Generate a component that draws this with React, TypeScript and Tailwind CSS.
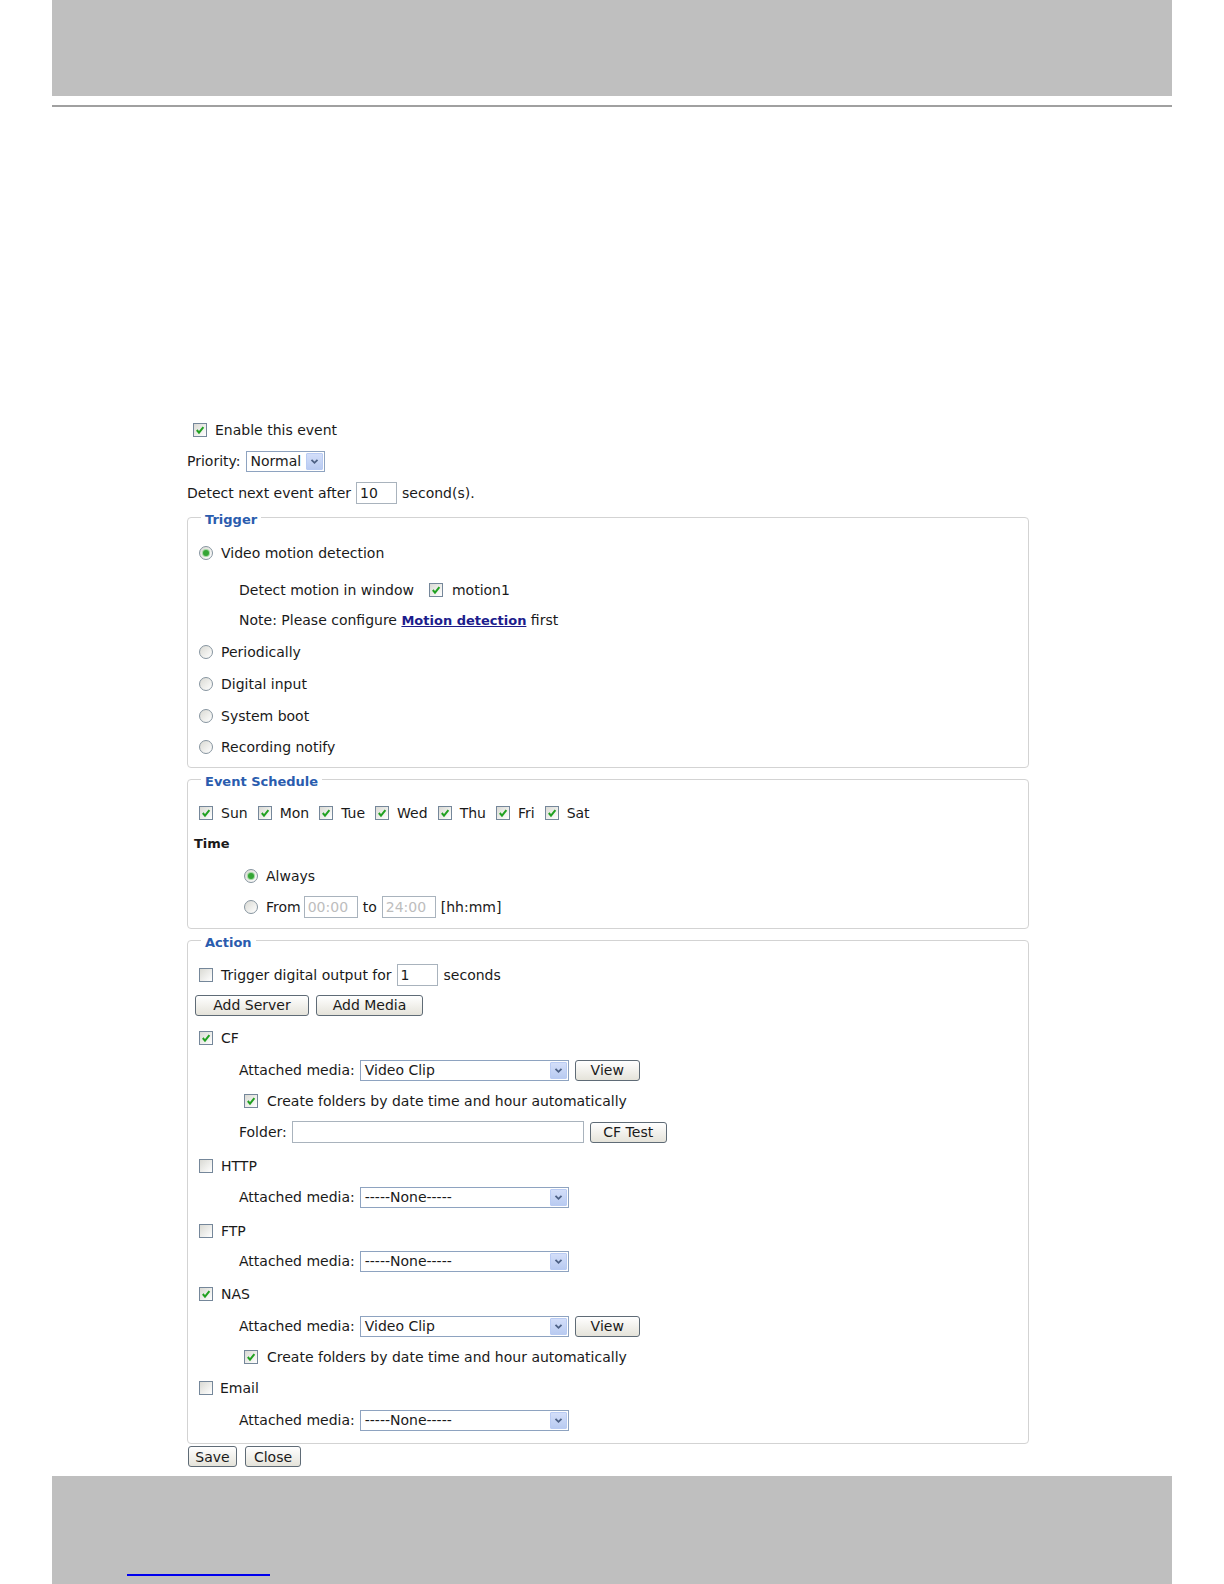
import React from "react";
import clsx from "clsx";

function Checkbox({ checked = false }: { checked?: boolean }) {
  return (
    <span className="flex h-[14px] w-[14px] shrink-0 items-center justify-center border border-[#75879a] bg-gradient-to-br from-[#dadad4] to-white">
      {checked && (
        <svg width="10" height="10" viewBox="0 0 10 10">
          <polyline points="1.8,5 4,7.6 8.4,2.2" fill="none" stroke="#21a121" strokeWidth="2" />
        </svg>
      )}
    </span>
  );
}

function Radio({ checked = false }: { checked?: boolean }) {
  return (
    <span className="flex h-[14px] w-[14px] shrink-0 items-center justify-center rounded-full border border-[#86949f] bg-gradient-to-br from-[#dadad4] to-white">
      {checked && <span className="h-[6px] w-[6px] rounded-full bg-[#35a535] ring-1 ring-[#a4d8a4]" />}
    </span>
  );
}

function Select({ value, width }: { value: string; width: string }) {
  return (
    <div className={clsx("flex h-[21px] items-stretch border border-[#8ea3c0] bg-white", width)}>
      <span className="flex flex-1 items-center pl-[4px] leading-none">{value}</span>
      <span className="m-[1px] flex w-[17px] items-center justify-center rounded-[1px] border border-[#b9cbf3] bg-gradient-to-b from-[#d3def9] to-[#b9cbf1]">
        <svg width="9" height="7" viewBox="0 0 9 7">
          <polyline points="1.5,1.8 4.5,4.8 7.5,1.8" fill="none" stroke="#4d6185" strokeWidth="1.8" />
        </svg>
      </span>
    </div>
  );
}

function TextBox({ value = "", width, muted = false }: { value?: string; width: string; muted?: boolean }) {
  return (
    <input
      type="text"
      readOnly
      value={value}
      className={clsx(
        "h-[22px] border border-[#a9b3bd] bg-white px-[3px] text-[14px] outline-none",
        muted ? "text-[#bdbdbd]" : "text-[#1a1a1a]",
        width
      )}
    />
  );
}

function Button({ label, width }: { label: string; width: string }) {
  return (
    <button
      type="button"
      className={clsx(
        "flex h-[21px] items-center justify-center rounded-[3px] border border-[#5f6b76] bg-gradient-to-b from-white to-[#e5e3da] text-[14px] leading-none text-[#1a1a1a]",
        width
      )}
    >
      {label}
    </button>
  );
}

function Row({ className, children }: { className?: string; children: React.ReactNode }) {
  return <div className={clsx("flex h-[22px] items-center whitespace-nowrap", className)}>{children}</div>;
}

function Legend({ children }: { children: React.ReactNode }) {
  return (
    <legend className="ml-[13px] px-[4px] pt-[5px] text-[13px] font-bold leading-[18px] text-[#2a5cae]">
      {children}
    </legend>
  );
}

const days = ["Sun", "Mon", "Tue", "Wed", "Thu", "Fri", "Sat"];

export default function App() {
  return (
    <div className="min-h-[1584px] bg-white font-['DejaVu_Sans',sans-serif] text-[14px] text-[#1a1a1a]">
      {/* page header band */}
      <div className="mx-[52px] h-[96px] bg-[#bfbfbf]" />
      <div className="mx-[52px] mt-[9px] h-[2px] bg-[#a0a0a0]" />

      <div className="ml-[187px] w-[842px]">
        <Row className="mt-[312px] pl-[6px]">
          <Checkbox checked />
          <span className="ml-[8px]">Enable this event</span>
        </Row>
        <Row className="mt-[9px]">
          <span>Priority:</span>
          <span className="ml-[5px]">
            <Select value="Normal" width="w-[79px]" />
          </span>
        </Row>
        <Row className="mt-[10px]">
          <span>Detect next event after</span>
          <span className="ml-[5px] flex">
            <TextBox value="10" width="w-[41px]" />
          </span>
          <span className="ml-[5px]">second(s).</span>
        </Row>

        {/* Trigger */}
        <fieldset className="mt-[2px] rounded-[4px] border border-[#d3d3d3] pb-[9px]">
          <Legend>Trigger</Legend>
          <Row className="mt-[13px] pl-[11px]">
            <Radio checked />
            <span className="ml-[8px]">Video motion detection</span>
          </Row>
          <Row className="mt-[15px] pl-[51px]">
            <span>Detect motion in window</span>
            <span className="ml-[15px]">
              <Checkbox checked />
            </span>
            <span className="ml-[9px]">motion1</span>
          </Row>
          <Row className="mt-[8px] pl-[51px]">
            <span>
              Note: Please configure{" "}
              <a className="text-[13px] font-bold text-[#1c1c8c] underline">Motion detection</a> first
            </span>
          </Row>
          {["Periodically", "Digital input", "System boot", "Recording notify"].map((t, i) => (
            <Row key={t} className={clsx("pl-[11px]", i === 3 ? "mt-[9px]" : "mt-[10px]")}>
              <Radio />
              <span className="ml-[8px]">{t}</span>
            </Row>
          ))}
        </fieldset>

        {/* Event Schedule */}
        <fieldset className="rounded-[4px] border border-[#d3d3d3] pb-[10px]">
          <Legend>Event Schedule</Legend>
          <Row className="mt-[11px] pl-[11px]">
            {days.map((d) => (
              <span key={d} className="mr-[10px] flex items-center">
                <Checkbox checked />
                <span className="ml-[8px]">{d}</span>
              </span>
            ))}
          </Row>
          <Row className="mt-[9px] pl-[6px]">
            <span className="text-[13px] font-bold">Time</span>
          </Row>
          <Row className="mt-[10px] pl-[56px]">
            <Radio checked />
            <span className="ml-[8px]">Always</span>
          </Row>
          <Row className="mt-[9px] pl-[56px]">
            <Radio />
            <span className="ml-[8px]">From</span>
            <span className="ml-[3px] flex">
              <TextBox value="00:00" width="w-[54px]" muted />
            </span>
            <span className="ml-[5px]">to</span>
            <span className="ml-[5px] flex">
              <TextBox value="24:00" width="w-[54px]" muted />
            </span>
            <span className="ml-[5px]">[hh:mm]</span>
          </Row>
        </fieldset>

        {/* Action */}
        <fieldset className="rounded-[4px] border border-[#d3d3d3] pb-[12px]">
          <Legend>Action</Legend>
          <Row className="mt-[12px] pl-[11px]">
            <Checkbox />
            <span className="ml-[8px]">Trigger digital output for</span>
            <span className="ml-[5px] flex">
              <TextBox value="1" width="w-[41px]" />
            </span>
            <span className="ml-[6px]">seconds</span>
          </Row>
          <Row className="mt-[8px] gap-[7px] pl-[7px]">
            <Button label="Add Server" width="w-[114px]" />
            <Button label="Add Media" width="w-[107px]" />
          </Row>

          <Row className="mt-[11px] pl-[11px]">
            <Checkbox checked />
            <span className="ml-[8px]">CF</span>
          </Row>
          <Row className="mt-[10px] pl-[51px]">
            <span>Attached media:</span>
            <span className="ml-[5px]">
              <Select value="Video Clip" width="w-[209px]" />
            </span>
            <span className="ml-[6px]">
              <Button label="View" width="w-[65px]" />
            </span>
          </Row>
          <Row className="mt-[9px] pl-[56px]">
            <Checkbox checked />
            <span className="ml-[9px]">Create folders by date time and hour automatically</span>
          </Row>
          <Row className="mt-[9px] pl-[51px]">
            <span>Folder:</span>
            <span className="ml-[5px] flex">
              <TextBox width="w-[292px]" />
            </span>
            <span className="ml-[6px]">
              <Button label="CF Test" width="w-[77px]" />
            </span>
          </Row>

          <Row className="mt-[12px] pl-[11px]">
            <Checkbox />
            <span className="ml-[8px]">HTTP</span>
          </Row>
          <Row className="mt-[9px] pl-[51px]">
            <span>Attached media:</span>
            <span className="ml-[5px]">
              <Select value="-----None-----" width="w-[209px]" />
            </span>
          </Row>

          <Row className="mt-[12px] pl-[11px]">
            <Checkbox />
            <span className="ml-[8px]">FTP</span>
          </Row>
          <Row className="mt-[8px] pl-[51px]">
            <span>Attached media:</span>
            <span className="ml-[5px]">
              <Select value="-----None-----" width="w-[209px]" />
            </span>
          </Row>

          <Row className="mt-[11px] pl-[11px]">
            <Checkbox checked />
            <span className="ml-[8px]">NAS</span>
          </Row>
          <Row className="mt-[10px] pl-[51px]">
            <span>Attached media:</span>
            <span className="ml-[5px]">
              <Select value="Video Clip" width="w-[209px]" />
            </span>
            <span className="ml-[6px]">
              <Button label="View" width="w-[65px]" />
            </span>
          </Row>
          <Row className="mt-[9px] pl-[56px]">
            <Checkbox checked />
            <span className="ml-[9px]">Create folders by date time and hour automatically</span>
          </Row>

          <Row className="mt-[9px] pl-[11px]">
            <Checkbox />
            <span className="ml-[7px]">Email</span>
          </Row>
          <Row className="mt-[10px] pl-[51px]">
            <span>Attached media:</span>
            <span className="ml-[5px]">
              <Select value="-----None-----" width="w-[209px]" />
            </span>
          </Row>
        </fieldset>

        <div className="mt-[2px] flex gap-[8px] pl-[1px]">
          <Button label="Save" width="w-[49px]" />
          <Button label="Close" width="w-[56px]" />
        </div>
      </div>

      {/* page footer band */}
      <div className="mx-[52px] mt-[9px] h-[108px] bg-[#bfbfbf] pt-[98px] pl-[75px]">
        <div className="h-[2px] w-[143px] bg-[#0000ee]" />
      </div>
    </div>
  );
}
